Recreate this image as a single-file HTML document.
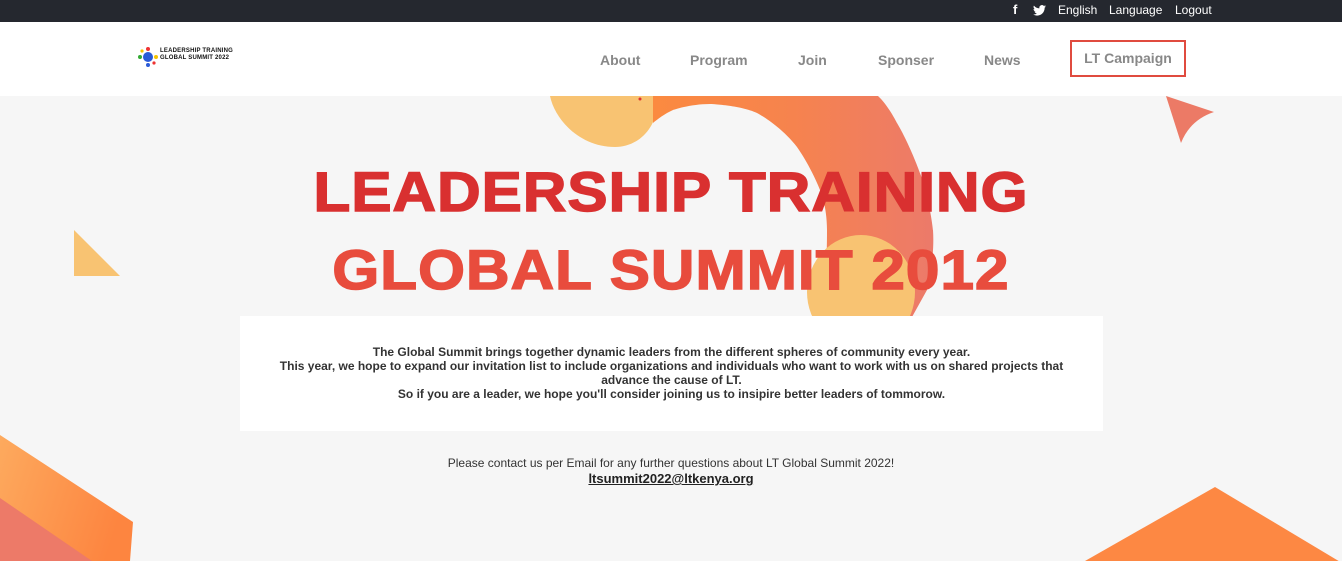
<!DOCTYPE html>
<html><head><meta charset="utf-8"><style>
*{margin:0;padding:0;box-sizing:border-box}
body{width:1342px;height:561px;overflow:hidden;background:#f6f6f6;font-family:"Liberation Sans",Arial,sans-serif;position:relative}
.top{position:absolute;left:0;top:0;width:1342px;height:22px;background:#25282f;color:#fff;font-size:12px}
.top span{position:absolute;top:3px}
.hdr{position:absolute;left:0;top:22px;width:1342px;height:74px;background:#fff}
.nav{position:absolute;top:30px;font-size:14px;font-weight:bold;color:#888}
.camp{position:absolute;left:1070px;top:18px;width:116px;height:37px;border:2px solid #e04b3f;color:#888;font-weight:bold;font-size:14px;text-align:center;line-height:33px}
h1{position:absolute;left:0;width:1342px;text-align:center;font-size:56px;font-weight:900;letter-spacing:1px;line-height:60px;-webkit-text-stroke:1.5px currentColor;transform:scaleX(1.075)}
.box{position:absolute;left:240px;top:316px;width:863px;height:115px;background:#fff;text-align:center;font-size:12px;font-weight:bold;color:#333;line-height:14px;padding-top:29px}
.ct{position:absolute;left:0;width:1342px;text-align:center;font-size:12px;color:#333}
</style></head><body>
<svg style="position:absolute;left:0;top:0" width="1342" height="561">
<defs><linearGradient id="g1" x1="0" y1="0" x2="1" y2="0"><stop offset="0" stop-color="#fb8a40"/><stop offset="0.5" stop-color="#f6834e"/><stop offset="1" stop-color="#ec7a6a"/></linearGradient>
<linearGradient id="g2" x1="0" y1="0" x2="1" y2="0.3"><stop offset="0" stop-color="#fdaa5e"/><stop offset="1" stop-color="#fd8540"/></linearGradient></defs>
<path d="M550 96 L657 96 C660 125 640 147 615 147 C580 147 555 120 550 96 Z" fill="#f8c372"/>
<path d="M653 96 L878 96 C888 105 897 123 897 123 C910 145 920 173 920 173 C930 200 933 230 933 230 C935 260 927 290 927 290 L912 317 L817 317 C826 290 827 257 827 230 C827 205 820 190 820 190 C810 165 797 147 797 147 C780 125 757 113 757 113 C740 105 710 104 710 104 C690 104 673 110 673 110 C662 115 653 123 653 123 Z" fill="url(#g1)"/>
<circle cx="640" cy="99" r="1.5" fill="#e03030"/>
<ellipse cx="861" cy="292" rx="54" ry="57" fill="#f8c372"/>
<polygon points="74,230 74,276 120,276" fill="#f8c372"/>
<path d="M1166 96 L1214 112 Q1190 120 1181 143 Z" fill="#ec7a66"/>
<polygon points="0,435 133,522 130,561 0,561" fill="url(#g2)"/>
<polygon points="0,498 0,561 92,561" fill="#ed7a68"/>
<polygon points="1085,561 1215,487 1342,563" fill="#fd8843"/>
</svg>
<div class="top">
<span style="left:1013px;font-weight:bold;font-size:13px;top:2px">f</span>
<svg style="position:absolute;left:1033px;top:5px" width="13" height="11" viewBox="0 0 24 20"><path d="M24 2.4a10 10 0 0 1-2.8.8A5 5 0 0 0 23.3.4a10 10 0 0 1-3.1 1.2A4.9 4.9 0 0 0 11.8 6 14 14 0 0 1 1.7.9a4.9 4.9 0 0 0 1.5 6.6A4.9 4.9 0 0 1 1 6.9a4.9 4.9 0 0 0 3.9 4.8 5 5 0 0 1-2.2.1 4.9 4.9 0 0 0 4.6 3.4A9.900 9.900 0 0 1 0 17.2 14 14 0 0 0 7.5 19.4c9 0 14-7.5 14-14v-.6A10 10 0 0 0 24 2.4z" fill="#fff"/></svg>
<span style="left:1058px">English</span><span style="left:1109px">Language</span><span style="left:1175px">Logout</span>
</div>
<div class="hdr">
<svg style="position:absolute;left:138px;top:25px" width="20" height="20"><circle cx="10" cy="10" r="5" fill="#2a5bd7"/><circle cx="10" cy="2" r="2" fill="#e33"/><circle cx="18" cy="10" r="2" fill="#f5c400"/><circle cx="10" cy="18" r="2" fill="#2a5bd7"/><circle cx="2" cy="10" r="2" fill="#3a3"/><circle cx="4" cy="4" r="1.6" fill="#f5c400"/><circle cx="16" cy="16" r="1.6" fill="#e33"/></svg>
<div style="position:absolute;left:160px;top:26px;font-size:6px;font-weight:bold;line-height:7px;color:#111;letter-spacing:0.2px">LEADERSHIP TRAINING<br>GLOBAL SUMMIT 2022</div>
<span class="nav" style="left:600px">About</span>
<span class="nav" style="left:690px">Program</span>
<span class="nav" style="left:798px">Join</span>
<span class="nav" style="left:878px">Sponser</span>
<span class="nav" style="left:984px">News</span>
<div class="camp">LT Campaign</div>
</div>
<h1 style="top:162px;color:#d93030">LEADERSHIP TRAINING</h1>
<h1 style="top:240px;color:#e84c3d">GLOBAL SUMMIT 2012</h1>
<div class="box">The Global Summit brings together dynamic leaders from the different spheres of community every year.<br>This year, we hope to expand our invitation list to include organizations and individuals who want to work with us on shared projects that<br>advance the cause of LT.<br>So if you are a leader, we hope you'll consider joining us to insipire better leaders of tommorow.</div>
<div class="ct" style="top:456px">Please contact us per Email for any further questions about LT Global Summit 2022!</div>
<div class="ct" style="top:471px;font-weight:bold;text-decoration:underline;font-size:13px;color:#222">ltsummit2022@ltkenya.org</div>
</body></html>
